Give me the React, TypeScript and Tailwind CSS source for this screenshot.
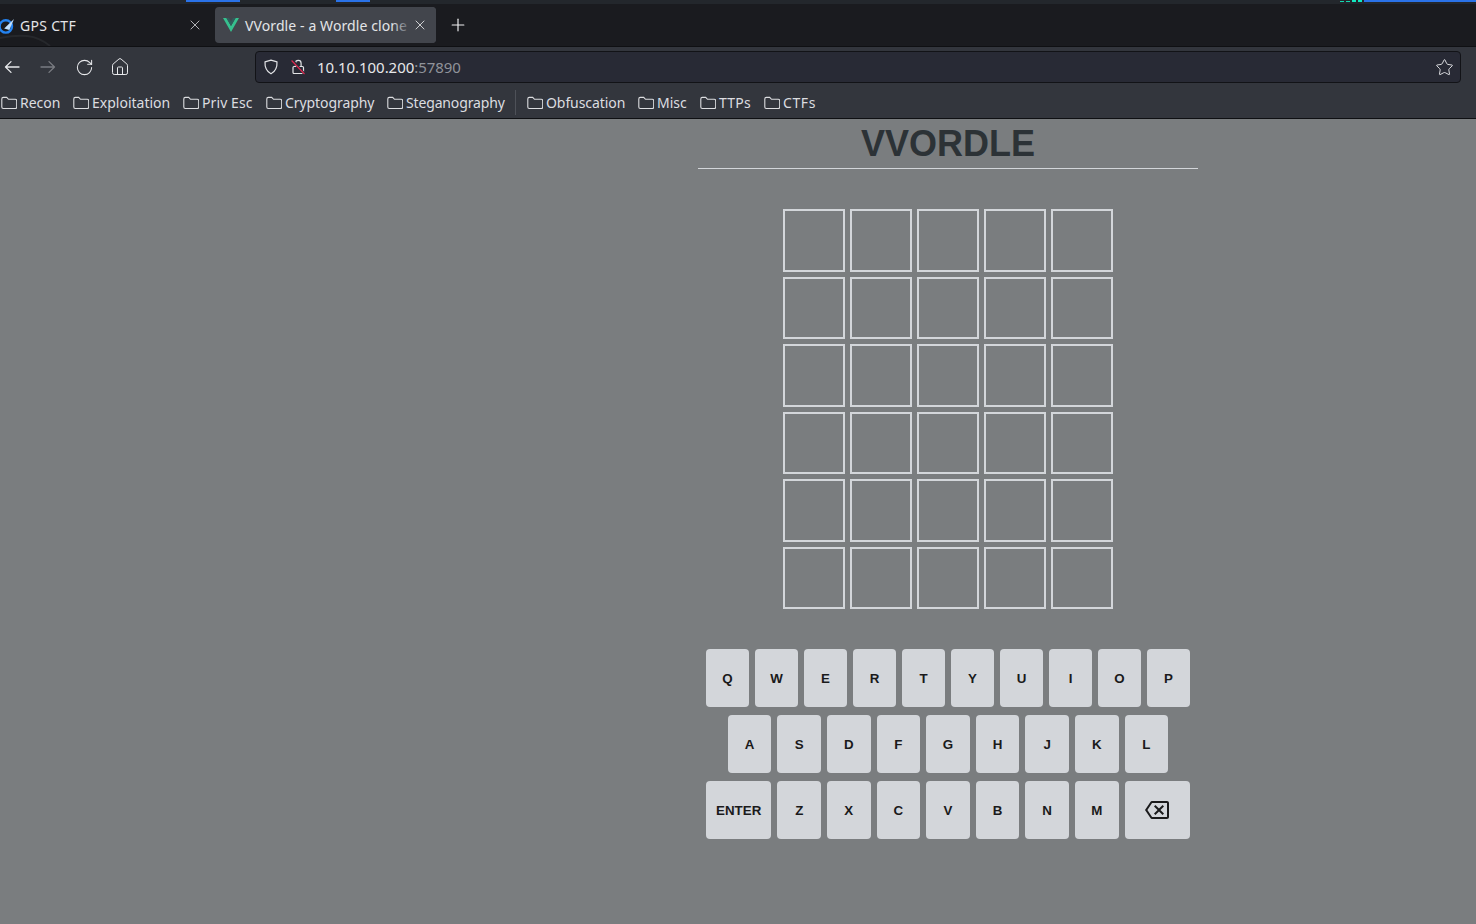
import React from "react";
import { RotateCw, Home, Star, Plus, X } from "lucide-react";

const Folder = () => (
  <svg width="16" height="16" viewBox="0 0 16 16" fill="none" stroke="#dcdde0" strokeWidth="1.1" className="shrink-0">
    <path d="M.8 3.9c0-.9.6-1.5 1.5-1.5h3.4l1.8 1.9h6.7c.9 0 1.5.6 1.5 1.5v6.2c0 .9-.6 1.5-1.5 1.5H2.3c-.9 0-1.5-.6-1.5-1.5z" />
  </svg>
);

const Bookmark = ({ label, width, spacing }: { label: string; width: string; spacing: string }) => (
  <div className="flex items-center gap-[3px] shrink-0">
    <Folder />
    <span className={`${width} ${spacing} whitespace-nowrap`}>{label}</span>
  </div>
);

const Key = ({ label }: { label: string }) => (
  <button className="flex-1 mx-[3px] h-[58px] pt-[2px] rounded-[4px] bg-[#d3d6da] text-[#1a1a1b] font-bold text-[13.33px] flex items-center justify-center">
    {label}
  </button>
);

const Arrow = ({ cls }: { cls: string }) => (
  <svg width="16" height="16" viewBox="0 0 16 16" fill="none" stroke="currentColor" strokeWidth="1.3" strokeLinecap="round" strokeLinejoin="round" className={cls}>
    <path d="M15 8H1.5M7 2.6 1.5 8 7 13.4" />
  </svg>
);

const rowA = ["Q", "W", "E", "R", "T", "Y", "U", "I", "O", "P"];
const rowB = ["A", "S", "D", "F", "G", "H", "J", "K", "L"];
const rowC = ["Z", "X", "C", "V", "B", "N", "M"];

export default function App() {
  return (
    <div className="h-[924px] w-[1476px] overflow-hidden flex flex-col bg-[#7a7d7f] font-['Noto_Sans',sans-serif]">
      {/* desktop strip */}
      <div className="h-[4px] bg-[#23272c] flex items-start shrink-0">
        <div className="w-[186px]" />
        <div className="w-[54px] h-[2px] bg-[#2a72e8]" />
        <div className="w-[96px]" />
        <div className="w-[34px] h-[2px] bg-[#2a72e8]" />
        <div className="w-[970px]" />
        <div className="w-[24px] h-[2px] flex gap-[2px]">
          <div className="w-[4px] h-[1px] mt-[1px] bg-[#12d8b0]" />
          <div className="w-[4px] h-[1px] mt-[1px] bg-[#12d8b0]" />
          <div className="w-[4px] h-[2px] bg-[#12e8c0]" />
          <div className="w-[4px] h-[2px] bg-[#12e8c0]" />
        </div>
        <div className="flex-1 h-[2px] bg-[#2a72e8]" />
      </div>

      {/* tabs */}
      <div className="relative h-[42px] shrink-0 bg-[#1a1b1f] flex items-center text-[14px]">
        <svg width="130" height="14" viewBox="0 0 130 14" fill="none" className="absolute left-0 bottom-0">
          <path d="M0 6 C20 2 36 2 50 14" stroke="#26282c" strokeWidth="2" />
        </svg>
        <div className="relative w-[215px] h-full flex items-center shrink-0 text-[#e4e5e8]">
          <svg width="15" height="16" viewBox="0 0 15 16" fill="none" className="absolute left-0 top-[14px]">
            <circle cx="5.8" cy="8.4" r="6.2" stroke="#2483f0" strokeWidth="2.4" />
            <path d="M4.2 10.4 14 1l-4.6 11z" fill="#bfe0ff" />
          </svg>
          <span className="ml-[20px] tracking-[0.3px]">GPS CTF</span>
          <X size={16} strokeWidth={1.2} className="absolute left-[187px] top-[13px] text-[#d8d9dc]" />
        </div>
        <div className="relative w-[221px] h-[36px] rounded-[4px] bg-[#42454c] flex items-center shrink-0 text-[#e4e5e8] overflow-hidden">
          <svg width="16" height="14" viewBox="0 0 16 14" className="ml-[8px] shrink-0">
            <path d="M0 0h3.4L8 8 12.6 0H16L8 14z" fill="#36c08e" />
            <path d="M3.4 0h2.6L8 3.6 10 0h2.6L8 8z" fill="#2f5d5c" />
          </svg>
          <span className="ml-[6px] whitespace-nowrap tracking-[0.1px]">VVordle - a Wordle clone w</span>
          <div className="absolute right-0 top-0 bottom-0 w-[44px] bg-[linear-gradient(to_right,transparent,#42454c_45%)]" />
          <X size={16} strokeWidth={1.3} className="absolute left-[197px] top-[10px] text-[#e4e5e8]" />
        </div>
        <Plus size={20} strokeWidth={1.4} className="ml-[12px] text-[#f0f0f2]" />
      </div>

      <div className="h-[1px] shrink-0 bg-[#0f1013]" />

      {/* nav */}
      <div className="h-[37px] shrink-0 bg-[#33363d] flex items-center relative">
        <Arrow cls="absolute left-[4px] top-[12px] text-[#e8e9ec]" />
        <Arrow cls="absolute left-[40px] top-[12px] text-[#7a7c82] rotate-180" />
        <RotateCw size={19} strokeWidth={1.3} className="absolute left-[75px] top-[11px] text-[#e8e9ec]" />
        <Home size={20} strokeWidth={1.2} className="absolute left-[110px] top-[10px] text-[#e8e9ec]" />
        <div className="ml-[255px] w-[1206px] h-[32px] mt-[3px] rounded-[4px] bg-[#282a35] border border-[#121317] flex items-center relative text-[15px]">
          <svg width="16" height="16" viewBox="0 0 16 16" fill="none" stroke="#e2e3e6" strokeWidth="1.2" className="absolute left-[7px] top-[7px]">
            <path d="M8 1.2 2 2.8c-.3 5.5 1.4 9.6 6 12 4.6-2.4 6.3-6.5 6-12z" strokeLinejoin="round" />
          </svg>
          <svg width="16" height="16" viewBox="0 0 16 16" fill="none" className="absolute left-[35px] top-[7px]">
            <path d="M4.5 7V4.2a2.8 2.8 0 0 1 5.6 0V7" stroke="#e2e3e6" strokeWidth="1.2" />
            <rect x="2" y="7.5" width="10.5" height="7" rx="1" stroke="#e2e3e6" strokeWidth="1.2" />
            <path d="M1 .8 13.5 15" stroke="#282a35" strokeWidth="2.6" />
            <path d="M.6 1.5 13.5 15" stroke="#e22850" strokeWidth="1.1" />
          </svg>
          <span className="ml-[61px] text-[#e6e7ea] tracking-[-0.05px]">10.10.100.200<span className="text-[#90939a]">:57890</span></span>
          <Star size={19} strokeWidth={1.2} className="absolute left-[1179px] top-[5.5px] text-[#e2e3e6]" />
        </div>
      </div>

      {/* bookmarks */}
      <div className="h-[34px] shrink-0 bg-[#33363d] flex items-center pl-[1px] gap-[13px] text-[14px] text-[#dcdde0] pt-[3px]">
        <Bookmark label="Recon" width="w-[40px]" spacing="tracking-[0px]" />
        <Bookmark label="Exploitation" width="w-[78px]" spacing="tracking-[0px]" />
        <Bookmark label="Priv Esc" width="w-[51px]" spacing="tracking-[0.1px]" />
        <Bookmark label="Cryptography" width="w-[89px]" spacing="tracking-[-0.08px]" />
        <Bookmark label="Steganography" width="w-[99px]" spacing="tracking-[-0.15px]" />
        <div className="w-[1px] h-[25px] bg-[#4e5158] -ml-[3px] -mr-[2px]" />
        <Bookmark label="Obfuscation" width="w-[79px]" spacing="tracking-[-0.08px]" />
        <Bookmark label="Misc" width="w-[30px]" spacing="tracking-[0px]" />
        <Bookmark label="TTPs" width="w-[32px]" spacing="tracking-[0.25px]" />
        <Bookmark label="CTFs" width="w-[33px]" spacing="tracking-[0.6px]" />
      </div>
      <div className="h-[1px] shrink-0 bg-[#0f1013]" />

      {/* page */}
      <div className="ml-[698px] w-[500px] flex flex-col items-center font-['Liberation_Sans',sans-serif]">
        <header className="w-full h-[50px] border-b border-[#d3d6da] flex items-center justify-center">
          <h1 className="text-[36px] leading-none font-bold text-[#2c3236]">VVORDLE</h1>
        </header>
        <div className="mt-[40px] w-[330px] h-[400px] grid grid-cols-5 grid-rows-6 gap-[5px]">
          {Array.from({ length: 30 }).map((_, i) => (
            <div key={i} className="border-2 border-[#d3d6da]" />
          ))}
        </div>
        <div className="mt-[40px] w-[490px] flex flex-col gap-[8px]">
          <div className="flex">
            {rowA.map((k) => <Key key={k} label={k} />)}
          </div>
          <div className="flex">
            <div className="flex-[0.5]" />
            {rowB.map((k) => <Key key={k} label={k} />)}
            <div className="flex-[0.5]" />
          </div>
          <div className="flex">
            <button className="flex-[1.5] mx-[3px] h-[58px] pt-[2px] rounded-[4px] bg-[#d3d6da] text-[#1a1a1b] font-bold text-[13.33px] flex items-center justify-center">ENTER</button>
            {rowC.map((k) => <Key key={k} label={k} />)}
            <button className="flex-[1.5] mx-[3px] h-[58px] rounded-[4px] bg-[#d3d6da] text-[#1a1a1b] flex items-center justify-center">
              <svg width="24" height="24" viewBox="0 0 24 24" fill="#1a1a1b">
                <path d="M22 3H7c-.69 0-1.23.35-1.59.88L0 12l5.41 8.11c.36.53.9.89 1.59.89h15c1.1 0 2-.9 2-2V5c0-1.1-.9-2-2-2zm0 16H7.07L2.4 12l4.66-7H22v14zm-11.59-2L14 13.41 17.59 17 19 15.59 15.41 12 19 8.41 17.59 7 14 10.59 10.41 7 9 8.41 12.59 12 9 15.59z" />
              </svg>
            </button>
          </div>
        </div>
      </div>
    </div>
  );
}
